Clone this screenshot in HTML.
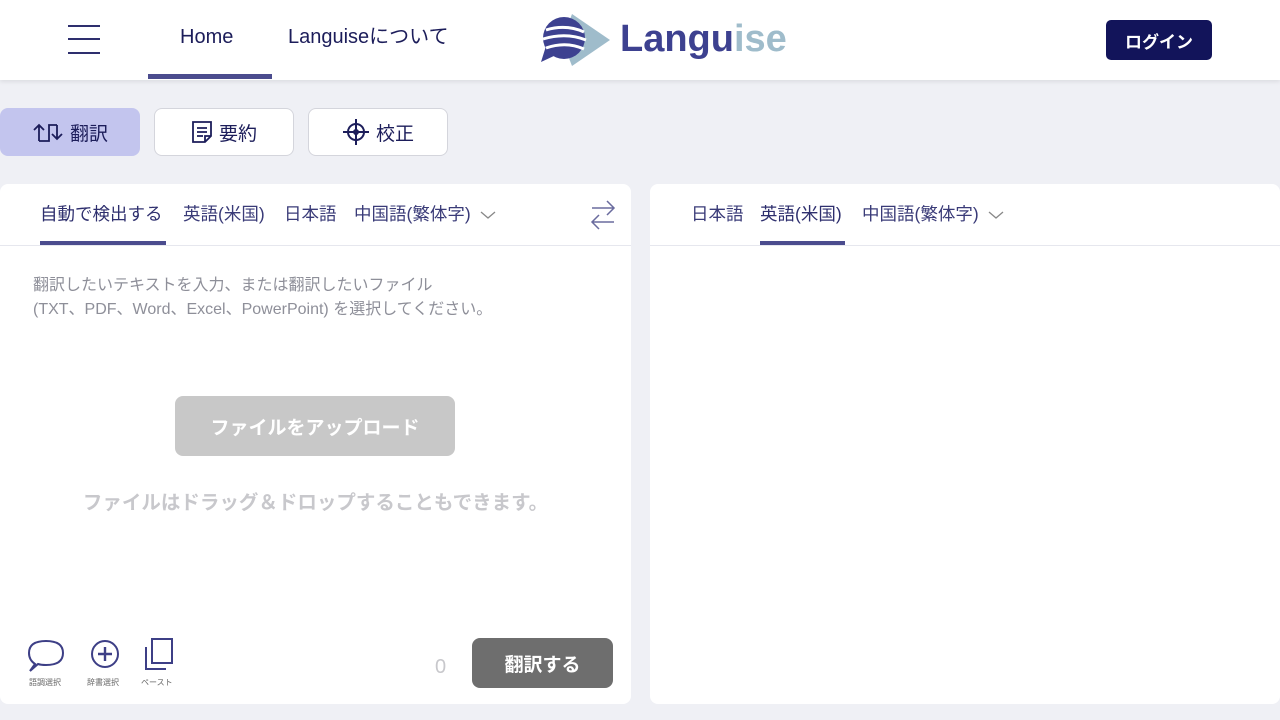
<!DOCTYPE html>
<html><head><meta charset="utf-8"><style>
*{box-sizing:border-box;margin:0;padding:0}
body{width:1280px;height:720px;background:#eff0f5;font-family:"Liberation Sans","Noto Sans CJK JP",sans-serif;position:relative;overflow:hidden;color:#1c1d5a}
.hdr{position:absolute;left:0;top:0;width:1280px;height:80px;background:#fff;box-shadow:0 2px 4px rgba(0,0,0,.08)}
.abs{position:absolute}
.tb{position:absolute;top:108px;height:48px;border-radius:8px;background:#fff;border:1px solid #d4d5dc;display:flex;align-items:center;justify-content:center;font-size:19px;gap:6px;color:#1c1d5a}
.panel{position:absolute;top:184px;height:520px;background:#fff;border-radius:8px}
.tabs{position:absolute;top:202px;height:24px;line-height:24px;font-size:17.5px;color:#3a3b78;white-space:nowrap}
.hl{position:absolute;top:24px;height:26px;line-height:26px;font-size:20px;color:#1c1d5a}
</style></head><body>
<div class="hdr">
 <div class="abs" style="left:68px;top:25px;width:32px;height:2px;background:#2e2f6e;box-shadow:0 13px 0 #2e2f6e,0 27px 0 #2e2f6e"></div>
 <div class="hl" style="left:180px">Home</div>
 <div class="abs" style="left:148px;top:74px;width:124px;height:5px;background:#4b4c8e"></div>
 <div class="hl" style="left:288px">Languiseについて</div>
 <svg class="abs" style="left:538px;top:12px" width="76" height="56" viewBox="0 0 76 56">
  <polygon points="34,2 72,28 34,54 24,28" fill="#9fbccb"/>
  <circle cx="26" cy="26" r="21" fill="#3d4190"/>
  <path d="M8 34 L3 50 L18 43Z" fill="#3d4190"/>
  <path d="M8 18 Q28 12 46 20 M5 27 Q28 20 48 28 M8 36 Q28 29 46 37" stroke="#fff" stroke-width="3" fill="none"/>
 </svg>
 <div class="abs" style="left:620px;top:17px;font-size:38px;line-height:44px;font-weight:bold;color:#3d4190">Langu<span style="color:#9fbccb">ise</span></div>
 <div class="abs" style="left:1106px;top:20px;width:106px;height:40px;background:#12145a;border-radius:5px;color:#fff;font-size:17px;font-weight:bold;display:flex;align-items:center;justify-content:center">ログイン</div>
</div>
<div class="tb" style="left:0;width:140px;background:#c3c5ee;border-color:#c3c5ee"><svg width="32" height="22" viewBox="0 0 32 22"><path d="M7 20V4M2 9l5-5 5 5M7 20h10V4h8M25 4v14M20 13l5 5 5-5" stroke="#1c1d5a" stroke-width="1.8" fill="none"/></svg>翻訳</div>
<div class="tb" style="left:154px;width:140px"><svg width="22" height="24" viewBox="0 0 22 24"><path d="M2 2h18v14l-6 6H2z M14 22v-6h6 M6 8h10M6 12h10M6 16h6" stroke="#1c1d5a" stroke-width="1.8" fill="none"/></svg>要約</div>
<div class="tb" style="left:308px;width:140px"><svg width="28" height="28" viewBox="0 0 28 28"><circle cx="14" cy="14" r="8" stroke="#1c1d5a" stroke-width="2" fill="none"/><circle cx="14" cy="14" r="3" fill="#1c1d5a"/><path d="M14 1v26M1 14h26" stroke="#1c1d5a" stroke-width="2"/></svg>校正</div>
<div class="panel" style="left:0;width:631px">
 <div class="abs" style="left:0;top:61px;width:631px;height:1px;background:#e6e7ee"></div>
 <div class="abs" style="left:40px;top:57px;width:126px;height:4px;background:#4b4c8e"></div>
 <svg class="abs" style="left:588px;top:14px" width="30" height="34" viewBox="0 0 30 34"><path d="M4 10h22M19 3l7 7-7 7M26 24H4M11 17l-7 7 7 7" stroke="#6a6b9e" stroke-width="1.5" fill="none"/></svg>
 <div class="abs" style="left:33px;top:90px;font-size:16px;color:#8e8f99;line-height:24px;white-space:nowrap">翻訳したいテキストを入力、または翻訳したいファイル<br>(TXT、PDF、Word、Excel、PowerPoint) を選択してください。</div>
 <div class="abs" style="left:175px;top:212px;width:280px;height:60px;background:#c8c8c8;border-radius:8px;color:#fff;font-size:19px;font-weight:bold;display:flex;align-items:center;justify-content:center">ファイルをアップロード</div>
 <div class="abs" style="left:0;width:631px;text-align:center;top:302px;font-size:19.5px;font-weight:bold;color:#c8c8cc">ファイルはドラッグ＆ドロップすることもできます。</div>
 <svg class="abs" style="left:27px;top:454px" width="38" height="36" viewBox="0 0 38 36"><path d="M8 26Q2 22 2 15Q2 3 19 3Q36 3 36 15Q36 27 19 27Q14 27 11 26L3 33Z" stroke="#3d3f86" stroke-width="2" fill="none"/></svg>
 <svg class="abs" style="left:90px;top:455px" width="30" height="30" viewBox="0 0 30 30"><circle cx="15" cy="15" r="13" stroke="#3d3f86" stroke-width="2" fill="none"/><path d="M15 8v14M8 15h14" stroke="#3d3f86" stroke-width="2.4"/></svg>
 <svg class="abs" style="left:144px;top:453px" width="30" height="34" viewBox="0 0 30 34"><path d="M8 2h20v24H8zM2 10v22h20" stroke="#3d3f86" stroke-width="2" fill="none"/></svg>
 <div class="abs" style="left:29px;top:493px;font-size:8px;color:#666">語調選択</div>
 <div class="abs" style="left:87px;top:493px;font-size:8px;color:#666">辞書選択</div>
 <div class="abs" style="left:141px;top:493px;font-size:8px;color:#666">ペースト</div>
 <div class="abs" style="left:435px;top:472px;font-size:20px;color:#c8c8cc">0</div>
 <div class="abs" style="left:472px;top:454px;width:141px;height:50px;background:#6e6e6e;border-radius:8px;color:#fff;font-size:19px;font-weight:bold;display:flex;align-items:center;justify-content:center">翻訳する</div>
</div>
<div class="tabs" style="left:40px;color:#2e2f6e">自動で検出する</div>
<div class="tabs" style="left:183px">英語(米国)</div>
<div class="tabs" style="left:284px">日本語</div>
<div class="tabs" style="left:354px">中国語(繁体字) <svg width="16" height="10" viewBox="0 0 16 10" style="margin-left:4px"><path d="M1 2l7 6 7-6" stroke="#888" stroke-width="1.3" fill="none"/></svg></div>
<div class="panel" style="left:650px;width:630px">
 <div class="abs" style="left:0;top:61px;width:630px;height:1px;background:#e6e7ee"></div>
 <div class="abs" style="left:110px;top:57px;width:85px;height:4px;background:#4b4c8e"></div>
</div>
<div class="tabs" style="left:691px">日本語</div>
<div class="tabs" style="left:760px;color:#2e2f6e">英語(米国)</div>
<div class="tabs" style="left:862px">中国語(繁体字) <svg width="16" height="10" viewBox="0 0 16 10" style="margin-left:4px"><path d="M1 2l7 6 7-6" stroke="#888" stroke-width="1.3" fill="none"/></svg></div>
</body></html>
